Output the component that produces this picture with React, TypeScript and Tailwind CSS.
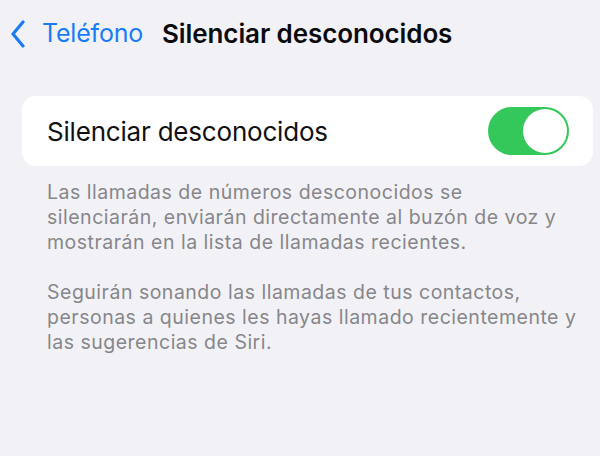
import React from 'react';

const font = { fontFamily: 'Inter, "Noto Sans", sans-serif' };

const ChevronLeft: React.FC = () => (
  <svg width="16" height="28" viewBox="0 0 16 28" fill="none">
    <path d="M13 2 L3 14 L13 26" stroke="#1a7cf5" strokeWidth="3.2" strokeLinecap="round" strokeLinejoin="round" />
  </svg>
);

const Toggle: React.FC<{ on: boolean }> = ({ on }) => (
  <div className={`w-[81px] h-[48px] rounded-full p-[2px] flex ${on ? 'bg-[#34c759] justify-end' : 'bg-[#e9e9eb] justify-start'}`}>
    <div className="w-[44px] h-[44px] rounded-full bg-white" />
  </div>
);

export default function App() {
  const [on, setOn] = React.useState(true);

  return (
    <div className="w-[600px] h-[456px] bg-[#f2f2f6] overflow-hidden antialiased" style={font}>
      {/* Nav bar */}
      <div className="flex items-center h-[68px] pl-[10px] pb-[1px]">
        <ChevronLeft />
        <span className="ml-[16px] text-[25px] text-[#1a7cf5] tracking-[-0.2px]">Teléfono</span>
        <span className="ml-[19px] text-[26px] font-semibold text-[#0b0b0d] tracking-[-0.1px]">Silenciar desconocidos</span>
      </div>

      {/* Setting card */}
      <div className="mt-[28px] ml-[22px] mr-[7px] h-[70px] bg-white rounded-[14px] flex items-center justify-between pl-[25px] pr-[24px]">
        <span className="text-[26px] text-[#111113] tracking-[-0.2px]">Silenciar desconocidos</span>
        <button onClick={() => setOn(!on)}>
          <Toggle on={on} />
        </button>
      </div>

      {/* Footer description */}
      <div className="pl-[47px] pr-[10px] pt-[14px] text-[19.5px] leading-[25px] text-[#86868b] tracking-[0.5px]">
        <p>
          Las llamadas de números desconocidos se<br />
          silenciarán, enviarán directamente al buzón de voz y<br />
          mostrarán en la lista de llamadas recientes.
        </p>
        <p className="mt-[25px]">
          Seguirán sonando las llamadas de tus contactos,<br />
          personas a quienes les hayas llamado recientemente y<br />
          las sugerencias de Siri.
        </p>
      </div>
    </div>
  );
}
